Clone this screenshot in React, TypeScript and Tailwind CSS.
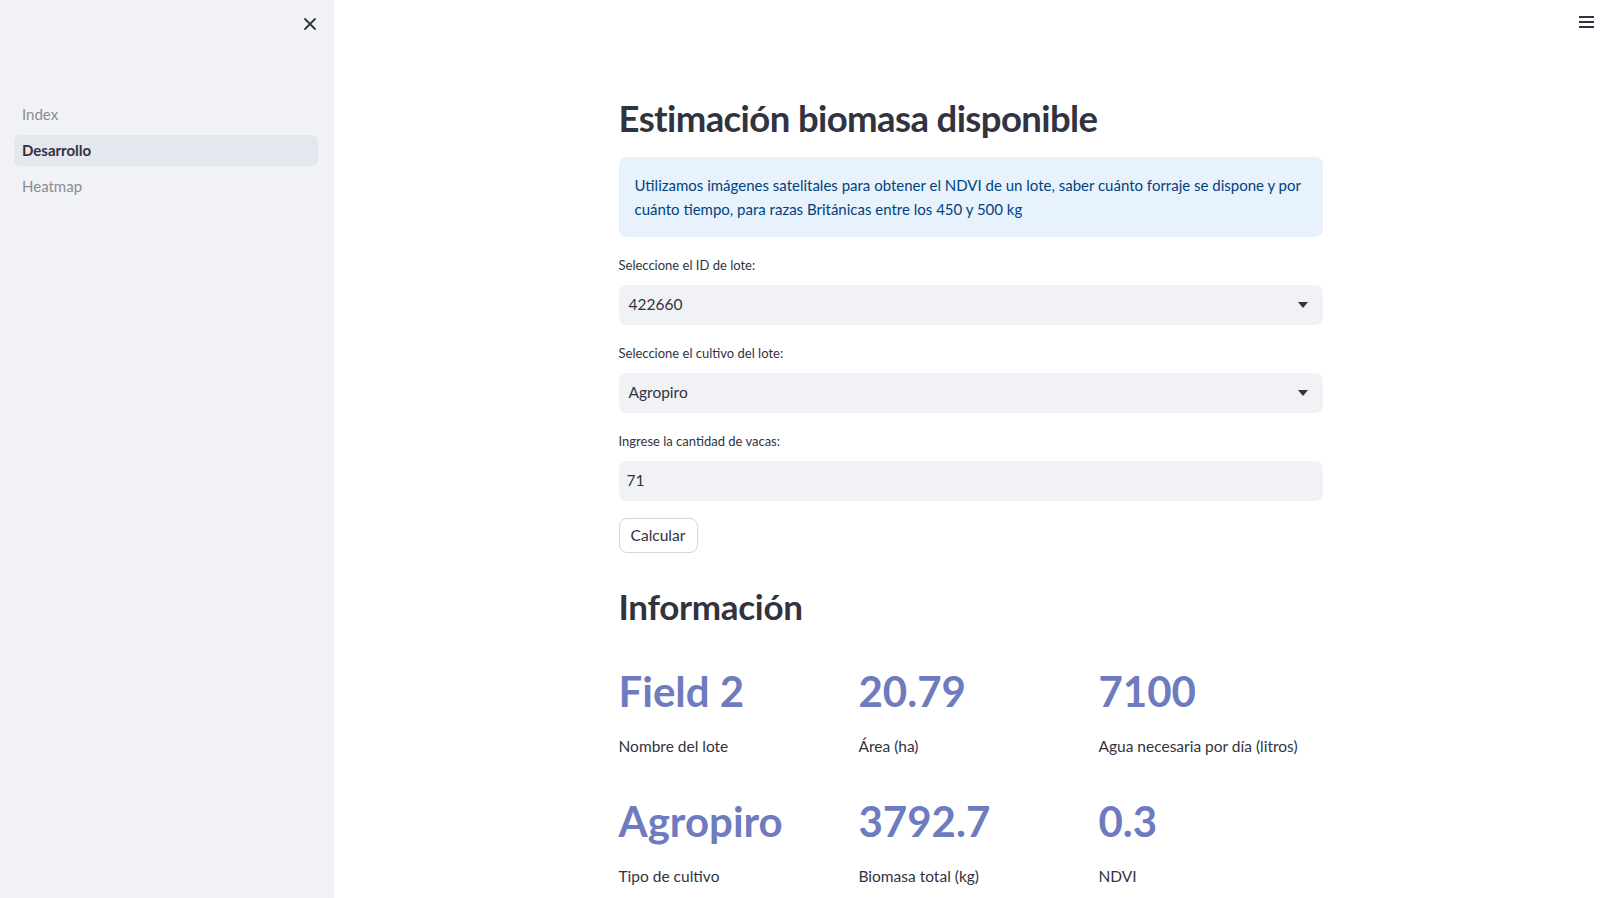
import React from 'react';

const font = { fontFamily: 'Lato, "Noto Sans", sans-serif' };

const navItems = [
  { label: 'Index', active: false },
  { label: 'Desarrollo', active: true },
  { label: 'Heatmap', active: false },
];

const metrics = [
  { value: 'Field 2', label: 'Nombre del lote' },
  { value: '20.79', label: 'Área (ha)' },
  { value: '7100', label: 'Agua necesaria por día (litros)' },
  { value: 'Agropiro', label: 'Tipo de cultivo' },
  { value: '3792.7', label: 'Biomasa total (kg)' },
  { value: '0.3', label: 'NDVI' },
];

const Caret = () => (
  <svg width="10" height="6" viewBox="0 0 10 6" className="text-[#31333f]">
    <path d="M0 0h10L5 6z" fill="currentColor" />
  </svg>
);

const SelectBox: React.FC<{ value: string }> = ({ value }) => (
  <div className="mt-[10px] h-[40px] rounded-lg bg-[#f0f2f6] flex items-center justify-between pl-[10px] pr-[15px]">
    <span className="text-[15.5px] text-[#31333f]">{value}</span>
    <Caret />
  </div>
);

const Label: React.FC<{ text: string }> = ({ text }) => (
  <div className="mt-[18px] text-[13px] leading-[20px] text-[#31333f]">{text}</div>
);

export default function App() {
  return (
    <div className="flex h-[898px] w-full overflow-hidden bg-white text-[#31333f]" style={font}>
      <aside className="w-[334px] shrink-0 bg-[#f0f2f6] relative">
        <button className="absolute left-[303px] top-[17px] text-[#31333f]">
          <svg width="14" height="14" viewBox="0 0 14 14">
            <path d="M2 2l10 10M12 2L2 12" stroke="currentColor" strokeWidth="1.8" strokeLinecap="round" />
          </svg>
        </button>
        <nav className="pt-[99px] pl-[14px] pr-[16px] flex flex-col gap-[5px]">
          {navItems.map((n) => (
            <div
              key={n.label}
              className={
                n.active
                  ? 'h-[31px] rounded-md bg-[#e4e7ee] px-[8px] flex items-center text-[15px] font-bold text-[#31333f]'
                  : 'h-[31px] rounded-md px-[8px] flex items-center text-[15px] text-[#8a8c94]'
              }
            >
              {n.label}
            </div>
          ))}
        </nav>
      </aside>

      <main className="flex-1 relative">
        <button className="absolute right-[13px] top-[16px] flex flex-col gap-[3px]">
          <span className="block w-[15px] h-[2px] bg-[#31333f]" />
          <span className="block w-[15px] h-[2px] bg-[#31333f]" />
          <span className="block w-[15px] h-[2px] bg-[#31333f]" />
        </button>

        <div className="mx-auto w-[704px] flex flex-col pt-[92px]">
          <h1 className="text-[36.5px] leading-[53px] font-bold tracking-[-0.6px]">Estimación biomasa disponible</h1>

          <div className="mt-[12px] rounded-lg bg-[#e8f2fc] px-4 py-4 text-[15px] leading-[24px] text-[#004280] whitespace-nowrap">
            Utilizamos imágenes satelitales para obtener el NDVI de un lote, saber cuánto forraje se dispone y por
            <br />
            cuánto tiempo, para razas Británicas entre los 450 y 500 kg
          </div>

          <Label text="Seleccione el ID de lote:" />
          <SelectBox value="422660" />

          <Label text="Seleccione el cultivo del lote:" />
          <SelectBox value="Agropiro" />

          <Label text="Ingrese la cantidad de vacas:" />
          <div className="mt-[10px] h-[40px] rounded-lg bg-[#f0f2f6] flex items-center px-[8px]">
            <span className="text-[15.5px] text-[#31333f]">71</span>
          </div>

          <div className="mt-[17px]">
            <button className="h-[35px] w-[79px] rounded-lg border border-[#d5d6da] bg-white text-[15.5px] text-[#31333f]">
              Calcular
            </button>
          </div>

          <h2 className="mt-[32px] text-[35px] leading-[43px] font-bold tracking-[-0.3px]">Información</h2>

          <div className="mt-[36px] grid grid-cols-3 gap-x-4 gap-y-[36px]">
            {metrics.map((m) => (
              <div key={m.label} className="flex flex-col">
                <div className="text-[42px] leading-[55px] font-bold text-[#6e7bbf]">{m.value}</div>
                <div className="mt-[15px] text-[15.5px] leading-[24px] text-[#31333f]">{m.label}</div>
              </div>
            ))}
          </div>
        </div>
      </main>
    </div>
  );
}
